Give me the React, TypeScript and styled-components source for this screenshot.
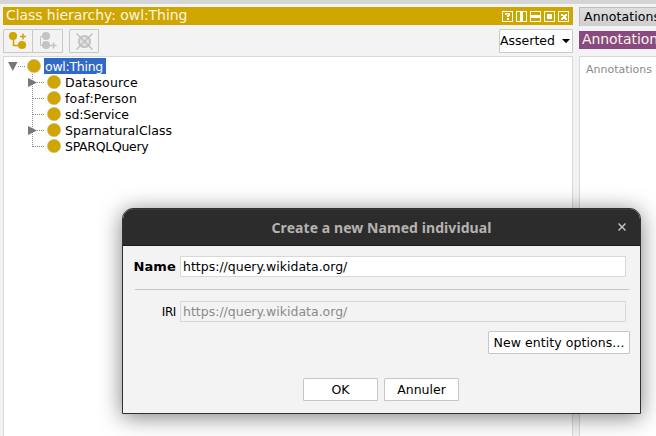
import React from "react";
import styled, { createGlobalStyle } from "styled-components";

const GOLD = "#cfa500";

const GlobalStyle = createGlobalStyle`
  * { box-sizing: border-box; }
  body { margin: 0; overflow: hidden; background: #f3f3f3; }
  button, input { font: inherit; letter-spacing: inherit; }
`;

const Window = styled.div`
  position: relative;
  width: 656px;
  height: 436px;
  overflow: hidden;
  display: flex;
  gap: 6px;
  padding: 3px 0 0 3px;
  border-top: 4px solid #d5d5d5;
  background: #f3f3f3;
  font: 12.5px/16px "DejaVu Sans", sans-serif;
  color: #000;
  white-space: nowrap;
`;

const Pane = styled.section<{ $width: number }>`
  display: flex;
  flex-direction: column;
  flex: none;
  width: ${(p) => p.$width}px;
  height: 429px;
`;

const PaneHeader = styled.header<{ $color: string }>`
  display: flex;
  flex: none;
  justify-content: space-between;
  align-items: center;
  height: 18px;
  padding: 0 4px 2px 3px;
  background: ${(p) => p.$color};
  color: #fff;
  font-size: 14px;
`;

const HeaderTitle = styled.span<{ $spacing: number }>`
  color: #fbf6e4;
  letter-spacing: ${(p) => p.$spacing}px;
`;

const HeaderIcons = styled.svg`
  display: block;
  flex: none;
  margin-top: 3px;
`;

const Toolbar = styled.div`
  display: flex;
  flex: none;
  height: 24px;
  margin: 4px 0 3px;
`;

const ToolButton = styled.button<{ $joined?: boolean; $gap?: boolean }>`
  width: ${(p) => (p.$joined ? 31 : 30)}px;
  height: 24px;
  margin: 0 0 0 ${(p) => (p.$joined ? -1 : p.$gap ? 6 : 0)}px;
  padding: 0;
  border: 1px solid #c8c8c8;
  border-top-left-radius: 2px;
  background: #f3f3f3;
  svg { display: block; }
`;

const Select = styled.button`
  display: flex;
  align-items: center;
  justify-content: space-between;
  width: 74px;
  height: 24px;
  margin-left: auto;
  padding: 0 1px 0 0;
  border: 1px solid #c8c8c8;
  border-top-left-radius: 2px;
  background: #fff;
  color: #000;
`;

const Content = styled.div`
  flex: 1;
  border: 1px solid #d8d8d8;
  border-bottom: 0;
  background: #fff;
`;

const TreeRow = styled.div`
  display: flex;
  height: 16px;
`;

const Branch = styled.svg`
  display: block;
  flex: none;
  overflow: visible;
`;

const TreeLabel = styled.span<{ $selected?: boolean; $spacing?: number }>`
  height: 16px;
  padding: 0 3px 0 ${(p) => (p.$selected ? 1 : 2)}px;
  line-height: 17px;
  letter-spacing: ${(p) => p.$spacing ?? 0}px;
  background: ${(p) => (p.$selected ? "#3069c6" : "transparent")};
  color: ${(p) => (p.$selected ? "#fff" : "#000")};
`;

const Tree = styled(Content)`
  padding-top: 1px;
`;

const Tab = styled.div`
  flex: none;
  height: 19px;
  margin-bottom: 5px;
  padding-left: 4px;
  border: 1px solid #bdbdbd;
  border-width: 1px 0 0 1px;
  background: linear-gradient(#dedede, #cfcfcf);
  line-height: 18px;
  letter-spacing: 0.1px;
`;

const RightContent = styled(Content)`
  margin-top: 7px;
  padding: 5px 6px;
  color: #8a8a8a;
  font-size: 11px;
`;

const Dialog = styled.div`
  position: absolute;
  left: 122px;
  top: 204px;
  width: 519px;
  height: 206px;
  border: 1px solid #303030;
  border-radius: 11px 11px 0 0;
  background: #f3f3f3;
  box-shadow: 0 3px 22px rgba(0, 0, 0, 0.5);
  overflow: hidden;
`;

const DialogBar = styled.header`
  display: grid;
  grid-template-columns: 36px 1fr 36px;
  align-items: center;
  height: 37px;
  border-top: 1px solid #3c3c3c;
  border-bottom: 1px solid #1b1b1b;
  background: #2c2c2c;
`;

const DialogTitle = styled.h1`
  grid-column: 2;
  margin: 0;
  color: #b5b3b0;
  text-align: center;
  font: bold 14px/20px "Noto Sans", sans-serif;
  letter-spacing: 0.07px;
`;

const FieldRow = styled.label<{ $bold?: boolean }>`
  display: grid;
  grid-template-columns: 53px 446px;
  column-gap: 4px;
  align-items: center;
  height: 21px;
  > span {
    text-align: right;
    font-weight: ${(p) => (p.$bold ? 700 : 400)};
    font-size: ${(p) => (p.$bold ? 13 : 12)}px;
    letter-spacing: ${(p) => (p.$bold ? 0.15 : -0.4)}px;
  }
`;

const DialogBody = styled.div`
  display: flex;
  flex-direction: column;
  padding-top: 10px;
`;

const TextField = styled.input`
  width: 446px;
  height: 21px;
  padding: 0 2px;
  border: 1px solid #d8d8d8;
  border-radius: 0;
  outline: none;
  background: #fff;
  color: #000;
  &:disabled { background: #f3f3f3; color: #8a8a8a; }
`;

const Divider = styled.div`
  flex: none;
  height: 1px;
  margin: 12px 11px 11px 12px;
  background: #c6c6c6;
`;

const Button = styled.button<{ $width: number }>`
  width: ${(p) => p.$width}px;
  height: 23px;
  padding: 0;
  border: 1px solid #c6c6c6;
  border-top-left-radius: 2px;
  background: #fff;
  color: #000;
  line-height: 19px;
`;

const OptionsRow = styled.div`
  display: flex;
  justify-content: flex-end;
  margin: 9px 10px 24px 0;
  letter-spacing: 0.07px;
`;

const ActionsRow = styled.div`
  display: flex;
  gap: 6px;
  margin-left: 180px;
`;

const CLASSES = [
  { name: "Datasource", expandable: true, spacing: 0.15 },
  { name: "foaf:Person", expandable: false, spacing: 0.2 },
  { name: "sd:Service", expandable: false, spacing: -0.1 },
  { name: "SparnaturalClass", expandable: true, spacing: 0.07 },
  { name: "SPARQLQuery", expandable: false, spacing: -0.3 },
];

function ChildBranch({ expandable, last }: { expandable: boolean; last: boolean }) {
  return (
    <Branch width="59" height="16">
      <path d={`M28.5 0V${last ? 9 : 16}M29 8.5H41`} fill="none" stroke="#888" strokeDasharray="1 1" />
      {expandable && <path d="M24 4L33 8.5L24 13Z" fill="#777" />}
      <circle cx="50" cy="8" r="6.6" fill={GOLD} stroke="#c9bb85" strokeWidth="0.7" />
    </Branch>
  );
}

export default function App() {
  return (
    <>
      <GlobalStyle />
      <Window>
        <Pane $width={570}>
          <PaneHeader $color={GOLD}>
            <HeaderTitle $spacing={-0.07}>Class hierarchy: owl:Thing</HeaderTitle>
            <HeaderIcons width="67" height="11" fill="#fff" shapeRendering="crispEdges">
              <path
                d="M.5 .5h10v10H.5zM14.5 .5h10v10h-10zM28.5 .5h10v10h-10zM42.5 .5h10v10h-10zM56.5 .5h10v10h-10z"
                fill="none"
                stroke="#fff"
              />
              <path d="M3 2h5v3H7v1H5V4h1V3H5v1H3zM5 7h2v2H5z" />
              <path d="M18 1h3v9h-3zM29 4h9v3h-9zM45 3h5v5h-5z" />
              <path d="M59 3h2v1h1v1-1h1V3h2v2h-1v1h-1h1v1h1v2h-2V8h-1V7v1h-1v1h-2V7h1V6h1V5h-2z" />
            </HeaderIcons>
          </PaneHeader>
          <Toolbar>
            <ToolButton aria-label="Add subclass">
              <svg width="28" height="22">
                <path d="M9.5 7v8.5H18M16 6.5h6M19 3.5v6" fill="none" stroke={GOLD} strokeWidth="1.5" />
                <circle cx="9" cy="6" r="4.1" fill={GOLD} />
                <circle cx="18" cy="15" r="4.1" fill={GOLD} />
              </svg>
            </ToolButton>
            <ToolButton $joined aria-label="Add sibling class">
              <svg width="29" height="22">
                <path d="M12 6.5H7.5v9H12" fill="none" stroke="#c4c4c4" />
                <path d="M17 15.5h6.5M20.5 12.5v6" fill="none" stroke="#c4c4c4" strokeWidth="1.6" />
                <circle cx="13" cy="6" r="4.1" fill="#c4c4c4" />
                <circle cx="13" cy="15" r="4.1" fill="#c4c4c4" />
              </svg>
            </ToolButton>
            <ToolButton $gap aria-label="Delete class">
              <svg width="28" height="22">
                <circle cx="14.5" cy="11.5" r="5.6" fill="#e2e2e2" stroke="#c4c4c4" strokeWidth="2" />
                <path d="M6.5 3.5l16 16M22.5 3.5l-16 16" stroke="#bdbdbd" strokeWidth="1.3" />
              </svg>
            </ToolButton>
            <Select>
              Asserted
              <svg width="10" height="6"><path d="M1 1h8L5 5.2z" fill="#000" /></svg>
            </Select>
          </Toolbar>
          <Tree>
            <TreeRow>
              <Branch width="40" height="16">
                <path d="M14 8.5h7" stroke="#888" strokeDasharray="1 1" />
                <path d="M4 4h9.5L8.8 13z" fill="#777" />
                <circle cx="30" cy="8" r="6.6" fill={GOLD} stroke="#c9bb85" strokeWidth="0.7" />
              </Branch>
              <TreeLabel $selected $spacing={-0.27}>owl:Thing</TreeLabel>
            </TreeRow>
            {CLASSES.map((item, index) => (
              <TreeRow key={item.name}>
                <ChildBranch expandable={item.expandable} last={index === CLASSES.length - 1} />
                <TreeLabel $spacing={item.spacing}>{item.name}</TreeLabel>
              </TreeRow>
            ))}
          </Tree>
        </Pane>
        <Pane $width={90}>
          <Tab>Annotations</Tab>
          <PaneHeader $color="#884a80">
            <HeaderTitle $spacing={-0.07}>Annotations</HeaderTitle>
          </PaneHeader>
          <RightContent>Annotations</RightContent>
        </Pane>
        <Dialog role="dialog">
          <DialogBar>
            <DialogTitle>Create a new Named individual</DialogTitle>
            <svg width="36" height="20">
              <path d="M14.5 5.5l7 7M21.5 5.5l-7 7" stroke="#c8c8c8" strokeWidth="1.4" />
            </svg>
          </DialogBar>
          <DialogBody>
            <FieldRow $bold>
              <span>Name</span>
              <TextField defaultValue="https://query.wikidata.org/" />
            </FieldRow>
            <Divider />
            <FieldRow>
              <span>IRI</span>
              <TextField disabled defaultValue="https://query.wikidata.org/" />
            </FieldRow>
            <OptionsRow>
              <Button $width={142}>New entity options...</Button>
            </OptionsRow>
            <ActionsRow>
              <Button $width={75}>OK</Button>
              <Button $width={75}>Annuler</Button>
            </ActionsRow>
          </DialogBody>
        </Dialog>
      </Window>
    </>
  );
}
